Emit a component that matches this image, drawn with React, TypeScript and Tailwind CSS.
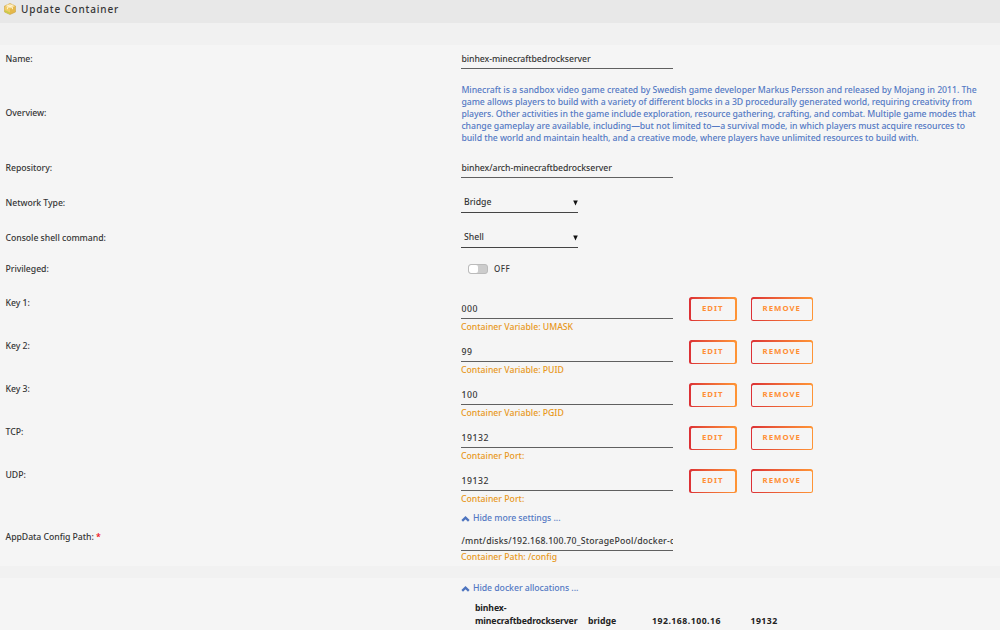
import type { ReactNode } from 'react';

const overview = [
  { text: 'Minecraft is a sandbox video game created by Swedish game developer Markus Persson and released by Mojang in 2011. The', spacing: 'tracking-[-0.025px]' },
  { text: 'game allows players to build with a variety of different blocks in a 3D procedurally generated world, requiring creativity from', spacing: 'tracking-[-0.05px]' },
  { text: 'players. Other activities in the game include exploration, resource gathering, crafting, and combat. Multiple game modes that', spacing: 'tracking-[-0.06px]' },
  { text: 'change gameplay are available, including—but not limited to—a survival mode, in which players must acquire resources to', spacing: 'tracking-[-0.045px]' },
  { text: 'build the world and maintain health, and a creative mode, where players have unlimited resources to build with.', spacing: 'tracking-[-0.07px]' },
];

const variables = [
  { label: 'Key 1:', value: '000', hint: 'Container Variable: UMASK' },
  { label: 'Key 2:', value: '99', hint: 'Container Variable: PUID' },
  { label: 'Key 3:', value: '100', hint: 'Container Variable: PGID' },
  { label: 'TCP:', value: '19132', hint: 'Container Port:' },
  { label: 'UDP:', value: '19132', hint: 'Container Port:' },
];

function Row({ label, className, children }: { label: ReactNode; className: string; children?: ReactNode }) {
  return (
    <div className={`flex ${className}`}>
      <div className="w-[455.5px] shrink-0 leading-5 tracking-[-0.04px]">{label}</div>
      {children}
    </div>
  );
}

function TextField({ value, className = 'tracking-[-0.06px]' }: { value: string; className?: string }) {
  return (
    <div className={`h-5 w-[211.5px] overflow-hidden whitespace-nowrap border-b border-[#606060] pl-[0.4px] leading-5 ${className}`}>
      {value}
    </div>
  );
}

function SelectField({ value }: { value: string }) {
  return (
    <div className="flex h-5 w-[117px] items-center justify-between border-b border-[#444] pl-[3px]">
      <span>{value}</span>
      <svg viewBox="0 0 5 6" className="h-[6px] w-[5px]">
        <path d="M0.2 0.5h4.6L2.5 5.5z" fill="#111" />
      </svg>
    </div>
  );
}

function OutlineButton({ children, className }: { children: ReactNode; className: string }) {
  return (
    <button className={`h-6 rounded-[2.5px] bg-linear-to-r from-[#dc2f35] to-[#ff9535] p-[1.5px] ${className}`}>
      <span className="flex h-full w-full items-center justify-center rounded-[1.5px] bg-[#f5f5f5] text-[7.8px] font-bold tracking-[1px] text-[#ff8f35]">
        {children}
      </span>
    </button>
  );
}

function Toggle({ children }: { children: ReactNode }) {
  return (
    <div className="flex h-5 items-center text-[#5479c4]">
      <svg viewBox="0 0 9 8" className="mr-[3px] h-2 w-[9px]">
        <path d="M1.2 5.8L4.5 2.6L7.8 5.8" fill="none" stroke="#4d74bf" strokeWidth="2.3" />
      </svg>
      <span className="tracking-[-0.04px]">{children}</span>
    </div>
  );
}

function BoxIcon() {
  return (
    <svg viewBox="0 0 12 12" className="h-3 w-3">
      <path d="M6 .5L11.5 3v6L6 11.5L.5 9V3z" fill="#e5b84a" stroke="#c79a35" strokeWidth=".5" />
      <path d="M6 .7L11.2 3L6 5.6L.8 3z" fill="#f8dfa0" />
      <path d="M.8 3.2L6 5.8v5.3L.8 8.7z" fill="#f2cb62" />
      <path d="M.8 7L6 9.4v1.8L.8 8.8z" fill="#c4cc49" />
      <path d="M3 1.9L8.4 4.4v1.8M8.8 1.9L3.4 4.4v1.8" fill="none" stroke="#fff4d2" strokeWidth="1" />
    </svg>
  );
}

export default function App() {
  return (
    <div className="h-[630px] w-[1000px] overflow-hidden bg-[#f5f5f5] font-['Noto_Sans','Open_Sans',sans-serif] text-[8.7px] font-medium text-[#363636]">
      <header className="flex h-[23px] items-start bg-[#e8e8e8] pl-1 pt-[3px]">
        <BoxIcon />
        <h1 className="ml-[5px] text-[10px] leading-3 tracking-[0.82px]">Update Container</h1>
      </header>
      <div className="h-[22px] bg-[#f1f1f1]" />

      <main className="h-[521px] pl-[5.5px] pt-1">
        <Row label="Name:" className="h-[34px]">
          <TextField value="binhex-minecraftbedrockserver" />
        </Row>
        <Row label="Overview:" className="h-[75px] items-start [&>div:first-child]:mt-5">
          <p className="whitespace-nowrap pl-[0.4px] pt-px leading-3 text-[#5479c4]">
            {overview.map((line) => (
              <span key={line.text} className={`block ${line.spacing}`}>{line.text}</span>
            ))}
          </p>
        </Row>
        <Row label="Repository:" className="h-[35px]">
          <TextField value="binhex/arch-minecraftbedrockserver" />
        </Row>
        <Row label="Network Type:" className="h-[35px]">
          <SelectField value="Bridge" />
        </Row>
        <Row label="Console shell command:" className="h-[31px]">
          <SelectField value="Shell" />
        </Row>
        <Row label="Privileged:" className="h-[34px]">
          <div className="flex h-5 items-center pl-[7px]">
            <span className="flex h-[10px] w-5 overflow-hidden rounded-[3px] border border-[#bbb] bg-[#ccc]">
              <span className="h-full w-[9px] rounded-[2px] bg-white" />
            </span>
            <span className="ml-[6px] text-[8px] tracking-[0.5px]">OFF</span>
          </div>
        </Row>

        {variables.map((v) => (
          <Row key={v.label} label={v.label} className="h-[43px]">
            <div className="w-[228px] pt-[6px]">
              <TextField value={v.value} className="tracking-[0.55px]" />
              <p className="mt-[2px] leading-3 text-[#e8981c]">{v.hint}</p>
            </div>
            <div className="flex items-start gap-[14px] pt-[4px]">
              <OutlineButton className="w-[47.5px]">EDIT</OutlineButton>
              <OutlineButton className="w-[62.5px]">REMOVE</OutlineButton>
            </div>
          </Row>
        ))}

        <Row label="" className="h-[19px] pt-px">
          <Toggle>Hide more settings ...</Toggle>
        </Row>
        <Row label={<>AppData Config Path: <span className="text-[#f0000c]">*</span></>} className="h-[38px]">
          <div className="pt-1">
            <TextField value="/mnt/disks/192.168.100.70_StoragePool/docker-c" className="tracking-[0.22px]" />
            <p className="leading-3 text-[#e8981c]">Container Path: /config</p>
          </div>
        </Row>
      </main>

      <div className="h-3 bg-[#f1f1f1]" />
      <div className="pl-[461px] pt-px">
        <Toggle>Hide docker allocations ...</Toggle>
        <div className="flex items-end pl-[14px] pt-[3px] font-bold leading-[13px] text-[#222]">
          <div className="w-[113px] tracking-[-0.12px]">
            <p>binhex-</p>
            <p>minecraftbedrockserver</p>
          </div>
          <p className="w-16">bridge</p>
          <p className="w-[98.5px] tracking-[0.5px]">192.168.100.16</p>
          <p className="tracking-[0.45px]">19132</p>
        </div>
      </div>
    </div>
  );
}
